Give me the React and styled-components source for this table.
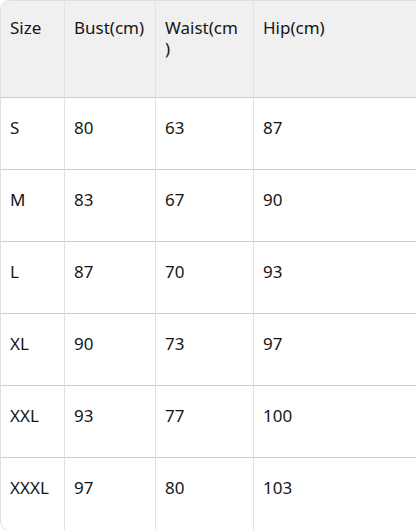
import React from 'react';
import styled, { createGlobalStyle } from 'styled-components';

const GlobalStyle = createGlobalStyle`
  html, body {
    margin: 0;
    padding: 0;
    background: #fff;
  }
  * {
    box-sizing: border-box;
  }
`;

const Frame = styled.div`
  width: 416px;
  height: 530px;
  overflow: hidden;
`;

const Table = styled.div`
  display: grid;
  grid-template-columns: 64px 91px 98px 1fr;
  width: 440px;
  border: 1px solid #dedede;
  border-radius: 10px;
  overflow: hidden;
  font-family: "Noto Sans", "Open Sans", sans-serif;
  color: #161616;
`;

const Cell = styled.div`
  height: 72px;
  padding: 0 6px 13px 9px;
  display: flex;
  align-items: center;
  background: #fff;
  border-right: 1px solid #e3e3e3;
  border-bottom: ${({ $last }) => ($last ? 'none' : '1px solid #cdcdcd')};
  font-size: 17px;
  line-height: 21px;
  word-break: break-all;
  line-break: anywhere;
`;

const HeadCell = styled(Cell)`
  height: 97px;
  padding: 16px ${({ $tight }) => ($tight ? '12px' : '6px')} 0 9px;
  align-items: flex-start;
  background: #f0f0f0;
`;

const headers = ['Size', 'Bust(cm)', 'Waist(cm)', 'Hip(cm)'];

const rows = [
  ['S', '80', '63', '87'],
  ['M', '83', '67', '90'],
  ['L', '87', '70', '93'],
  ['XL', '90', '73', '97'],
  ['XXL', '93', '77', '100'],
  ['XXXL', '97', '80', '103'],
];

export default function App() {
  return (
    <Frame>
      <GlobalStyle />
      <Table>
        {headers.map((h) => (
          <HeadCell key={h} $tight={h === 'Waist(cm)'}>{h}</HeadCell>
        ))}
        {rows.map((row, i) =>
          row.map((v, j) => (
            <Cell key={`${i}-${j}`} $last={i === rows.length - 1}>{v}</Cell>
          ))
        )}
      </Table>
    </Frame>
  );
}
